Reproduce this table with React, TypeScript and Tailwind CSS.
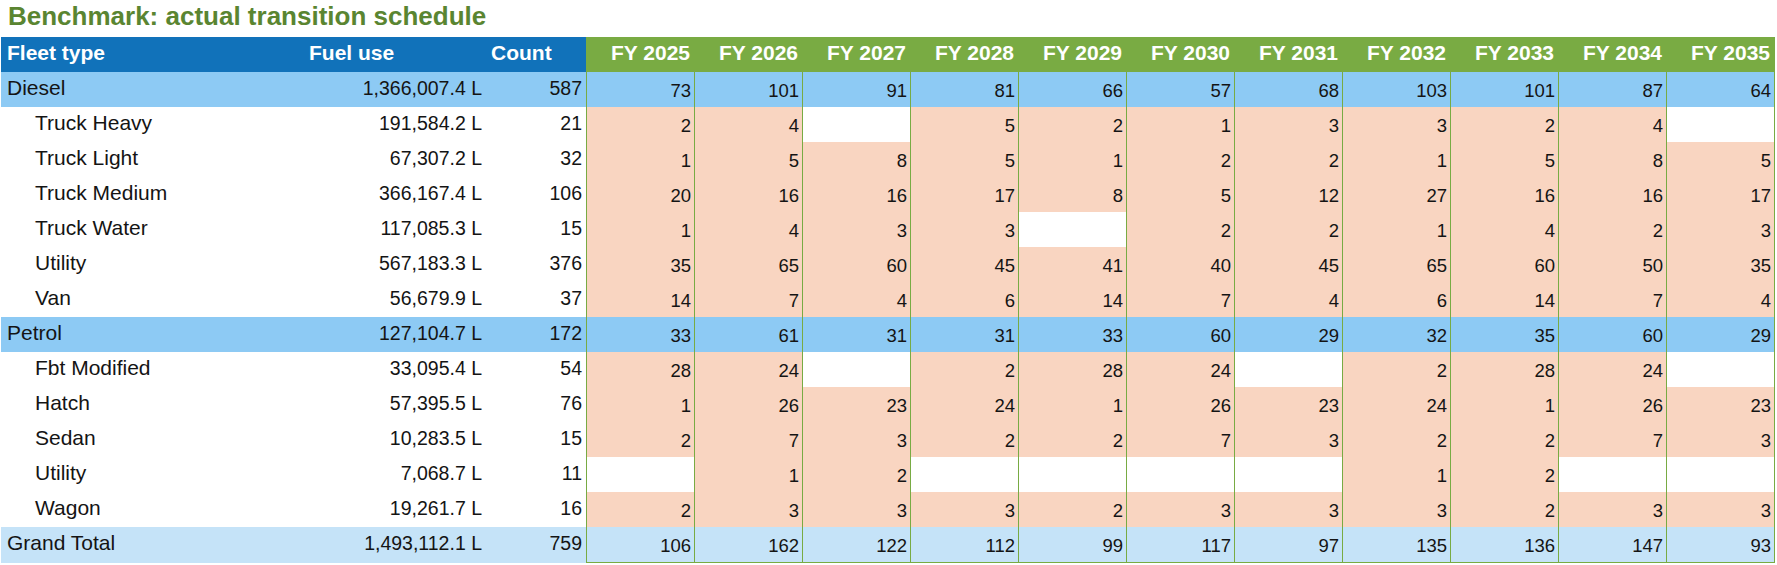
import React from 'react';

type RowKind = 'group' | 'item' | 'total';

interface FleetRow {
  label: string;
  fuel: string;
  count: number;
  kind: RowKind;
  vals: (number | null)[];
}

const years = [2025, 2026, 2027, 2028, 2029, 2030, 2031, 2032, 2033, 2034, 2035];

const rows: FleetRow[] = [
  { label: 'Diesel', fuel: '1,366,007.4 L', count: 587, kind: 'group', vals: [73, 101, 91, 81, 66, 57, 68, 103, 101, 87, 64] },
  { label: 'Truck Heavy', fuel: '191,584.2 L', count: 21, kind: 'item', vals: [2, 4, null, 5, 2, 1, 3, 3, 2, 4, null] },
  { label: 'Truck Light', fuel: '67,307.2 L', count: 32, kind: 'item', vals: [1, 5, 8, 5, 1, 2, 2, 1, 5, 8, 5] },
  { label: 'Truck Medium', fuel: '366,167.4 L', count: 106, kind: 'item', vals: [20, 16, 16, 17, 8, 5, 12, 27, 16, 16, 17] },
  { label: 'Truck Water', fuel: '117,085.3 L', count: 15, kind: 'item', vals: [1, 4, 3, 3, null, 2, 2, 1, 4, 2, 3] },
  { label: 'Utility', fuel: '567,183.3 L', count: 376, kind: 'item', vals: [35, 65, 60, 45, 41, 40, 45, 65, 60, 50, 35] },
  { label: 'Van', fuel: '56,679.9 L', count: 37, kind: 'item', vals: [14, 7, 4, 6, 14, 7, 4, 6, 14, 7, 4] },
  { label: 'Petrol', fuel: '127,104.7 L', count: 172, kind: 'group', vals: [33, 61, 31, 31, 33, 60, 29, 32, 35, 60, 29] },
  { label: 'Fbt Modified', fuel: '33,095.4 L', count: 54, kind: 'item', vals: [28, 24, null, 2, 28, 24, null, 2, 28, 24, null] },
  { label: 'Hatch', fuel: '57,395.5 L', count: 76, kind: 'item', vals: [1, 26, 23, 24, 1, 26, 23, 24, 1, 26, 23] },
  { label: 'Sedan', fuel: '10,283.5 L', count: 15, kind: 'item', vals: [2, 7, 3, 2, 2, 7, 3, 2, 2, 7, 3] },
  { label: 'Utility', fuel: '7,068.7 L', count: 11, kind: 'item', vals: [null, 1, 2, null, null, null, null, 1, 2, null, null] },
  { label: 'Wagon', fuel: '19,261.7 L', count: 16, kind: 'item', vals: [2, 3, 3, 3, 2, 3, 3, 3, 2, 3, 3] },
  { label: 'Grand Total', fuel: '1,493,112.1 L', count: 759, kind: 'total', vals: [106, 162, 122, 112, 99, 117, 97, 135, 136, 147, 93] },
];

// left columns + the year block (1 + 11*107 + 10 gaps + 1 = 1189px)
const rowGrid = 'grid grid-cols-[304px_181px_100px_1189px] h-[35px]';
const yearGrid = 'grid grid-cols-[repeat(11,107px)] gap-x-px px-px';

function leftBg(kind: RowKind) {
  if (kind === 'group') return 'bg-[#8dcaf4]';
  if (kind === 'total') return 'bg-[#c5e3f8]';
  return 'bg-white';
}

function cellBg(kind: RowKind, v: number | null) {
  if (kind === 'group') return 'bg-[#8dcaf4]';
  if (kind === 'total') return 'bg-[#c5e3f8]';
  return v === null ? 'bg-white' : 'bg-[#f9d5c1]';
}

export default function App() {
  return (
    <div className="w-[1777px] h-[565px] bg-white text-[#141414] font-['Liberation_Sans',Arial,sans-serif] overflow-hidden">
      {/* Title */}
      <div className="h-[37px] pl-[8px] pt-[1px] text-[26px] leading-[30px] font-bold text-[#5a8531]">
        Benchmark: actual transition schedule
      </div>

      <div className="ml-[1px]">
        {/* Header */}
        <div className={`${rowGrid} text-[21px] font-bold text-white`}>
          <div className="bg-[#1172ba] flex items-end pl-[6px] pb-[4px]">Fleet type</div>
          <div className="bg-[#1172ba] flex items-end pl-[4px] pb-[4px]">Fuel use</div>
          <div className="bg-[#1172ba] flex items-end pl-[5px] pb-[4px]">Count</div>
          <div className={`${yearGrid} bg-[#79ab43]`}>
            {years.map((y) => (
              <div key={y} className="flex items-end justify-end pr-[4px] pb-[4px]">
                FY {y}
              </div>
            ))}
          </div>
        </div>

        {/* Body */}
        {rows.map((r, ri) => (
          <div key={ri} className={rowGrid}>
            <div
              className={`${leftBg(r.kind)} flex items-end pb-[4px] text-[21px] ${
                r.kind === 'item' ? 'pl-[34px]' : 'pl-[6px]'
              }`}
            >
              {r.label}
            </div>
            <div className={`${leftBg(r.kind)} flex items-end justify-end pr-[4px] pb-[4px] text-[19.5px]`}>
              {r.fuel}
            </div>
            <div className={`${leftBg(r.kind)} flex items-end justify-end pr-[4px] pb-[4px] text-[19.5px]`}>
              {r.count}
            </div>
            <div className={`${yearGrid} pb-px bg-[#78ab43] text-[18.5px]`}>
              {r.vals.map((v, i) => (
                <div
                  key={i}
                  className={`${cellBg(r.kind, v)} flex items-end justify-end pr-[3px] pb-[2px]`}
                >
                  {v ?? ''}
                </div>
              ))}
            </div>
          </div>
        ))}
      </div>
    </div>
  );
}
